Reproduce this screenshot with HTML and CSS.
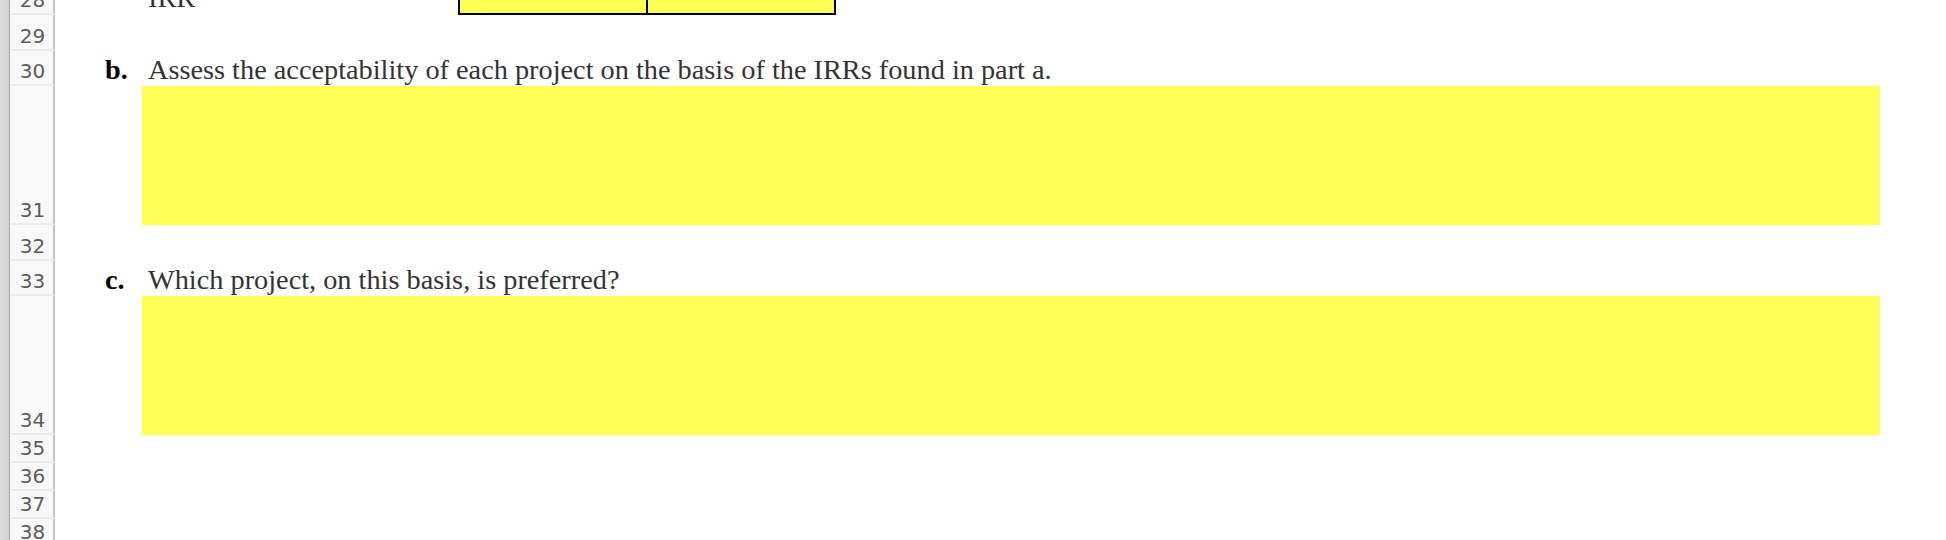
FILE: index.html
```html
<!DOCTYPE html>
<html lang="en">
<head>
<meta charset="utf-8">
<title>Worksheet</title>
<link rel="stylesheet" href="styles.css">
</head>
<body>
<div class="sheet">
  <div class="row r-cut">
    <div class="edge"></div>
    <div class="rh">28</div>
    <div class="cells irr-row">
      <span class="txt">IRR</span>
      <div class="answer-table">
        <div class="acell"></div>
        <div class="acell"></div>
      </div>
    </div>
  </div>

  <div class="row r-36">
    <div class="edge"></div>
    <div class="rh">29</div>
    <div class="cells"></div>
  </div>

  <div class="row r-35">
    <div class="edge"></div>
    <div class="rh">30</div>
    <div class="cells question">
      <span class="marker">b.</span>
      <span class="txt">Assess the acceptability of each project on the basis of the IRRs found in part a.</span>
    </div>
  </div>

  <div class="row r-139">
    <div class="edge"></div>
    <div class="rh">31</div>
    <div class="cells answer"><div class="fill"></div></div>
  </div>

  <div class="row r-36">
    <div class="edge"></div>
    <div class="rh">32</div>
    <div class="cells"></div>
  </div>

  <div class="row r-35">
    <div class="edge"></div>
    <div class="rh">33</div>
    <div class="cells question">
      <span class="marker">c.</span>
      <span class="txt">Which project, on this basis, is preferred?</span>
    </div>
  </div>

  <div class="row r-139">
    <div class="edge"></div>
    <div class="rh">34</div>
    <div class="cells answer"><div class="fill"></div></div>
  </div>

  <div class="row r-28">
    <div class="edge"></div>
    <div class="rh">35</div>
    <div class="cells"></div>
  </div>
  <div class="row r-28">
    <div class="edge"></div>
    <div class="rh">36</div>
    <div class="cells"></div>
  </div>
  <div class="row r-28">
    <div class="edge"></div>
    <div class="rh">37</div>
    <div class="cells"></div>
  </div>
  <div class="row r-28">
    <div class="edge"></div>
    <div class="rh">38</div>
    <div class="cells"></div>
  </div>
</div>
</body>
</html>
```

FILE: styles.css
```css
html, body {
  margin: 0;
  padding: 0;
  background: #ffffff;
}

body {
  width: 1946px;
  height: 540px;
  overflow: hidden;
}

.sheet {
  display: flex;
  flex-direction: column;
}

.row {
  display: grid;
  grid-template-columns: 10px 45px 1fr;
  grid-template-rows: minmax(0, 1fr);
  overflow: hidden;
  flex: none;
}

.r-cut { height: 15px; }
.r-36  { height: 36px; }
.r-35  { height: 35px; }
.r-139 { height: 139px; }
.r-28  { height: 28px; }

/* grey window edge at the far left */
.edge {
  background: linear-gradient(to right, #dcdcdc, #d0d0d0);
  border-right: 1px solid #ababab;
  box-sizing: border-box;
}

/* row number header */
.rh {
  box-sizing: border-box;
  background: #f8f8f8;
  border-right: 2px solid #c4c4c4;
  border-bottom: 2px solid #ececec;
  display: flex;
  align-items: flex-end;
  justify-content: center;
  padding: 0 0 3px 2px;
  font-family: "DejaVu Sans", "Liberation Sans", sans-serif;
  font-size: 20px;
  line-height: 20px;
  color: #5c5c5c;
  overflow: hidden;
}

.cells {
  font-family: "Liberation Serif", "Times New Roman", serif;
  font-size: 28.3px;
  line-height: 28px;
  color: #333333;
  min-height: 0;
}

.irr-row {
  display: grid;
  grid-template-columns: 93px 310px 378px;
  grid-template-rows: minmax(0, 1fr);
  align-items: end;
  overflow: hidden;
}

.irr-row .txt {
  grid-column: 2;
  grid-row: 1;
  padding-bottom: 3px;
}

.answer-table {
  grid-column: 3;
  grid-row: 1;
  display: grid;
  grid-template-columns: 186px 2px 186px;
  border: 2px solid #000000;
  border-top: none;
  height: 40px;
  background: #ffff55;
}

.answer-table .acell:first-child {
  grid-column: 1;
  grid-row: 1;
}

.answer-table .acell:last-child {
  grid-column: 3;
  grid-row: 1;
}

.answer-table::before {
  content: "";
  grid-column: 2;
  grid-row: 1;
  background: #000000;
}

.question {
  display: grid;
  grid-template-columns: 50px 37px 1fr;
  align-items: end;
  padding-bottom: 2px;
}

.marker {
  grid-column: 2;
  font-weight: bold;
  color: #000000;
}

.question .txt {
  grid-column: 3;
  padding-left: 6px;
  white-space: nowrap;
}

.answer {
  display: grid;
  grid-template-columns: 87px 1738px;
}

.fill {
  grid-column: 2;
  background: #ffff55;
}
```
